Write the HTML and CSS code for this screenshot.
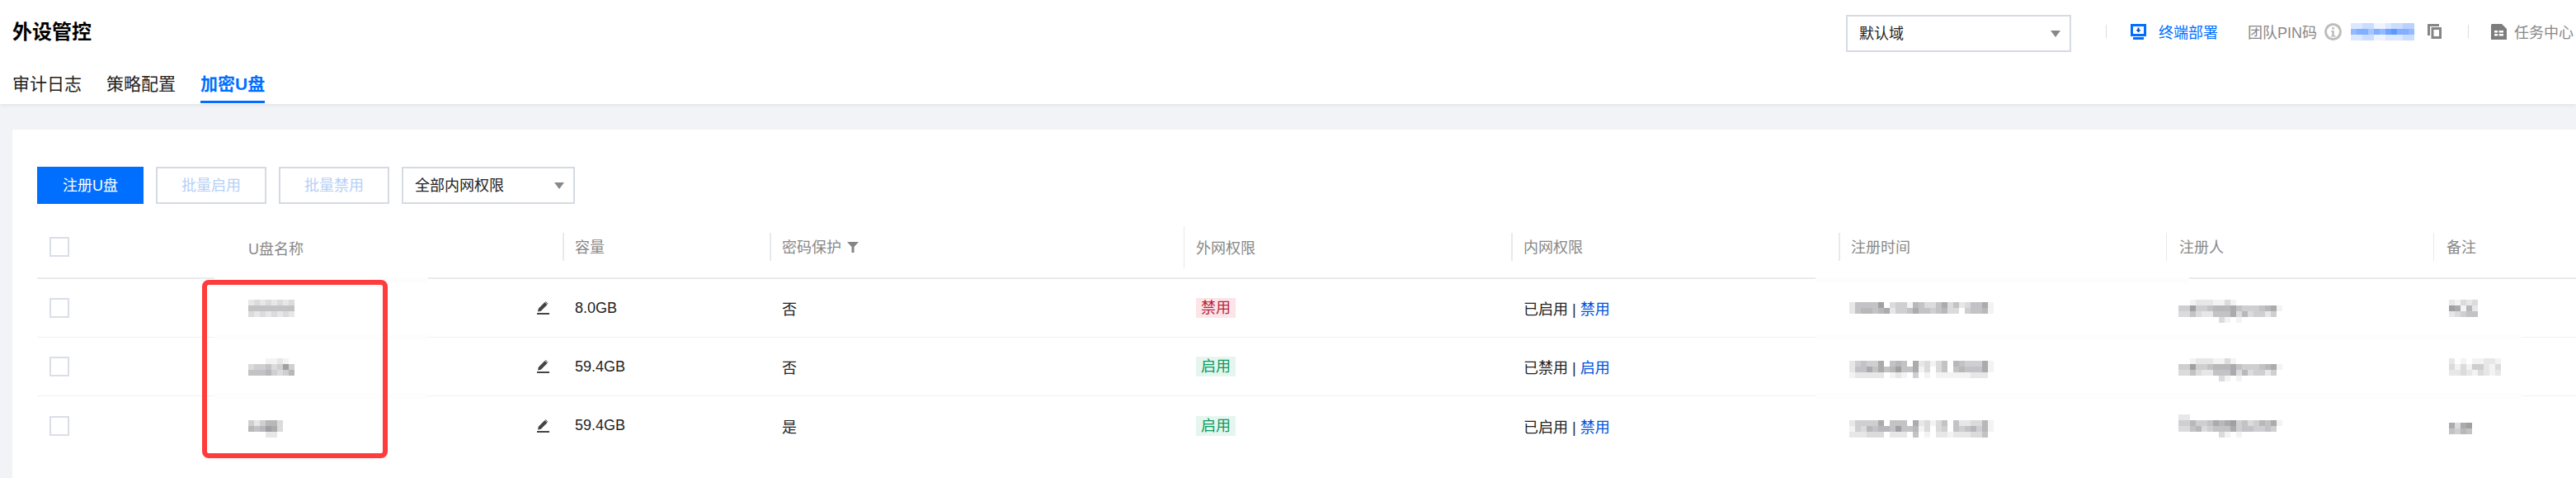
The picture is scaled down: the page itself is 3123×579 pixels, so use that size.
FILE: index.html
```html
<!DOCTYPE html>
<html lang="zh-CN">
<head>
    <meta charset="UTF-8">
    <meta name="viewport" content="width=device-width, initial-scale=1.0">
    <title>外设管控</title>
    <link rel="stylesheet" href="styles.css">
</head>
<body>
    <header class="page-head">
        <div class="head-top">
            <h1 class="page-title">外设管控</h1>
            <div class="head-tools">
                <div class="select select-domain">默认域<i class="caret"></i></div>
                <span class="tool-divider divider-a"></span>
                <svg class="icon icon-deploy" width="19" height="19" viewBox="0 0 19 19">
                    <path fill="#006eff" fill-rule="evenodd" d="M0 0h19v15H0zM3 3v9h13V3z"/>
                    <path fill="#0b4fb5" d="M8.5 4.5h2v2.500h2L9.500 10.500 6.500 7h2z"/>
                    <rect fill="#006eff" x="3" y="16" width="13" height="3"/>
                </svg>
                <a class="tool-link">终端部署</a>
                <span class="tool-text pin-label">团队PIN码</span>
                <svg class="icon icon-info" width="21" height="21" viewBox="0 0 21 21">
                    <circle cx="10.500" cy="10.500" r="9" fill="none" stroke="#bdbdbd" stroke-width="3"/>
                    <rect fill="#bdbdbd" x="9.200" y="5" width="2.600" height="2.600"/>
                    <path fill="#bdbdbd" d="M8 9h3.800v6H13.500v1.500h-5.500V15h1.200v-4.500H8z"/>
                </svg>
                <span class="mosaic mosaic-blue pin-value" data-rows="22331123344 67757689776 22331122233"></span>
                <svg class="icon icon-copy" width="17" height="18" viewBox="0 0 17 18">
                    <path fill="none" stroke="#858585" stroke-width="3" d="M14 1.500H1.500V14"/>
                    <rect fill="none" stroke="#858585" stroke-width="3" x="6" y="5.500" width="9.500" height="11"/>
                </svg>
                <span class="tool-divider divider-b"></span>
                <svg class="icon icon-doc" width="19" height="19" viewBox="0 0 19 19">
                    <path fill="#7d7d7d" d="M1 0h12l6 6v13H0V1z"/>
                    <path fill="#fff" d="M4 8h4v2.500H4zM9.500 8H15v2.500H9.500zM4 12h4v2.500H4zM9.500 12H15v2.500H9.500z"/>
                </svg>
                <span class="tool-text task-label">任务中心</span>
            </div>
        </div>
        <nav class="tabs">
            <a class="tab">审计日志</a>
            <a class="tab">策略配置</a>
            <a class="tab tab-active">加密U盘</a>
        </nav>
    </header>

    <main class="page-main">
        <section class="card">
            <div class="toolbar">
                <button class="btn btn-primary">注册U盘</button>
                <button class="btn btn-disabled">批量启用</button>
                <button class="btn btn-disabled">批量禁用</button>
                <div class="select select-scope">全部内网权限<i class="caret"></i></div>
            </div>

            <table class="disk-table">
                <colgroup>
                    <col class="col-check"><col class="col-name"><col class="col-size"><col class="col-pass">
                    <col class="col-ext"><col class="col-int"><col class="col-time"><col class="col-user"><col class="col-note">
                </colgroup>
                <thead>
                    <tr>
                        <th class="cell-check"><span class="checkbox"></span></th>
                        <th class="th-plain">U盘名称</th>
                        <th><div class="th-inner">容量</div></th>
                        <th><div class="th-inner">密码保护
                            <svg class="icon-filter" width="14" height="13" viewBox="0 0 14 13"><path fill="#858585" d="M0 0h14L8.500 6v7h-3V6z"/></svg>
                        </div></th>
                        <th><div class="th-inner th-tall">外网权限</div></th>
                        <th><div class="th-inner">内网权限</div></th>
                        <th><div class="th-inner">注册时间</div></th>
                        <th><div class="th-inner th-thin">注册人</div></th>
                        <th><div class="th-inner th-thin">备注</div></th>
                    </tr>
                </thead>
                <tbody>
                    <tr>
                        <td class="cell-check"><span class="checkbox"></span></td>
                        <td><div class="name-cell">
                            <span class="mosaic" data-rows="23232323 55555555 32323232"></span>
                            <svg class="icon-edit" width="15" height="16" viewBox="0 0 15 16"><path fill="#444" d="M0 14h15v2H0zM1 12.500l.8-3.700L9.500 1l3 3-7.700 7.700z"/><path fill="#444" d="M10.500 0l3 3-.6.600-3-3z"/></svg>
                        </div></td>
                        <td>8.0GB</td>
                        <td>否</td>
                        <td><span class="tag tag-off">禁用</span></td>
                        <td>已启用 | <a class="link">禁用</a></td>
                        <td class="cell-time"><span class="mosaic" data-rows="2555580344165335735235571 2566567244575545633045561"></span></td>
                        <td class="cell-user"><span class="mosaic" data-rows="000000000000000000 001222113100000000 448445666754445671 335322555736344240 000000031010000000"></span></td>
                        <td class="cell-note"><span class="mosaic" data-rows="21323 87162 23455"></span></td>
                    </tr>
                    <tr>
                        <td class="cell-check"><span class="checkbox"></span></td>
                        <td><div class="name-cell">
                            <span class="mosaic" data-rows="00011210 34453484 55564346"></span>
                            <svg class="icon-edit" width="15" height="16" viewBox="0 0 15 16"><path fill="#444" d="M0 14h15v2H0zM1 12.500l.8-3.700L9.500 1l3 3-7.700 7.700z"/><path fill="#444" d="M10.500 0l3 3-.6.600-3-3z"/></svg>
                        </div></td>
                        <td>59.4GB</td>
                        <td>否</td>
                        <td><span class="tag tag-on">启用</span></td>
                        <td>已禁用 | <a class="link">启用</a></td>
                        <td class="cell-time"><span class="mosaic" data-rows="0000000000000000000000000 2454470565072313506544471 2557575685571303505655571 1222220121040101111112220"></span></td>
                        <td class="cell-user"><span class="mosaic" data-rows="000000000000000000 001222113100000000 448445666754445671 335322555736344240 000000031010000000"></span></td>
                        <td class="cell-note"><span class="mosaic" data-rows="201011221 313144213 223213212"></span></td>
                    </tr>
                    <tr>
                        <td class="cell-check"><span class="checkbox"></span></td>
                        <td><div class="name-cell">
                            <span class="mosaic" data-rows="000000 424663 656873 000220"></span>
                            <svg class="icon-edit" width="15" height="16" viewBox="0 0 15 16"><path fill="#444" d="M0 14h15v2H0zM1 12.500l.8-3.700L9.500 1l3 3-7.700 7.700z"/><path fill="#444" d="M10.500 0l3 3-.6.600-3-3z"/></svg>
                        </div></td>
                        <td>59.4GB</td>
                        <td>是</td>
                        <td><span class="tag tag-on">启用</span></td>
                        <td>已启用 | <a class="link">禁用</a></td>
                        <td class="cell-time"><span class="mosaic" data-rows="0000000000000000000000000 2444470555072313505223361 1436566585561303405456461 2223330222050102212223350"></span></td>
                        <td class="cell-user"><span class="mosaic" data-rows="220000000000000000 446445767845346571 335634555745544540 000000031010000000"></span></td>
                        <td class="cell-note"><span class="mosaic" data-rows="0000 7378 5465"></span></td>
                    </tr>
                </tbody>
            </table>

            <div class="patch patch-name patch-head"></div>
            <div class="patch patch-name patch-r1"></div>
            <div class="patch patch-name patch-r2"></div>
            <div class="patch patch-time patch-head"></div>
            <div class="patch patch-time patch-r1"></div>
            <div class="patch patch-time patch-r2"></div>
            <div class="patch patch-note patch-r1"></div>
            <div class="patch patch-note patch-r2"></div>
            <div class="mark-box"></div>
        </section>
    </main>

    <script src="mosaic.js"></script>
</body>
</html>
```

FILE: styles.css
```css
html, body {
    margin: 0;
    height: 579px;
    overflow: hidden;
}
body {
    font-family: "Liberation Sans", "Noto Sans CJK SC", sans-serif;
    font-size: 18px;
    color: #222;
    background-color: #f2f3f7;
}

/* top bar */
.page-head {
    position: relative;
    box-sizing: border-box;
    height: 126px;
    padding-left: 15px;
    background-color: #fff;
    box-shadow: 0 2px 4px rgba(0, 0, 0, 0.06);
}
.head-top {
    display: flex;
    align-items: center;
    justify-content: space-between;
    height: 76px;
}
.page-title {
    margin: 0 0 3px;
    font-size: 24px;
    font-weight: bold;
    color: #000;
}
.head-tools {
    display: flex;
    align-items: center;
    padding-right: 3px;
}
.tool-divider {
    width: 1px;
    height: 16px;
    background-color: #ddd;
}
.divider-a {
    margin: 0 29px 0 42px;
}
.divider-b {
    margin: 0 27px 0 32px;
}
.tool-link {
    margin-left: 15px;
    color: #006eff;
}
.tool-text {
    color: #888;
}
.pin-label {
    margin-left: 36px;
}
.icon {
    flex: none;
    display: block;
}
.icon-info {
    margin-left: 9px;
}
.pin-value {
    margin-left: 11px;
}
.icon-copy {
    margin-left: 16px;
}
.task-label {
    margin-left: 9px;
}

.select {
    position: relative;
    box-sizing: border-box;
    display: flex;
    align-items: center;
    height: 45px;
    padding-bottom: 3px;
    background-color: #fff;
    border: 2px solid #d5dae3;
}
.select-domain {
    width: 273px;
    margin-top: 5px;
    padding-left: 14px;
}
.select-scope {
    width: 210px;
    padding-left: 14px;
}
.caret {
    position: absolute;
    right: 11px;
    top: 17px;
    border-style: solid;
    border-width: 8px 6px 0;
    border-color: #888 transparent transparent;
}

.tabs {
    display: flex;
    gap: 30px;
    height: 50px;
}
.tab {
    box-sizing: border-box;
    height: 49px;
    padding-top: 10px;
    font-size: 21px;
    line-height: 32px;
    color: #222;
}
.tab-active {
    font-weight: bold;
    color: #006eff;
    border-bottom: 3px solid #006eff;
}

/* content */
.page-main {
    padding: 31px 0 0 15px;
}
.card {
    position: relative;
    height: 422px;
    padding: 45px 0 0 30px;
    box-sizing: border-box;
    background-color: #fff;
}
.toolbar {
    display: flex;
    gap: 15px;
    margin-bottom: 15px;
}
.btn {
    box-sizing: border-box;
    height: 45px;
    padding: 0 0 3px;
    font-family: inherit;
    font-size: 18px;
    background-color: #fff;
}
.btn-primary {
    width: 129px;
    color: #fff;
    background-color: #006eff;
    border: none;
}
.btn-disabled {
    width: 134px;
    color: #b5d0f7;
    border: 2px solid #d5dae3;
}

/* table */
.disk-table {
    width: 3078px;
    table-layout: fixed;
    border-collapse: separate;
    border-spacing: 0;
}
.col-check { width: 241px; }
.col-name { width: 396px; }
.col-size { width: 251px; }
.col-pass { width: 502px; }
.col-ext { width: 397px; }
.col-int { width: 397px; }
.col-time { width: 397px; }
.col-user { width: 324px; }
.col-note { width: 173px; }

.disk-table th {
    box-sizing: border-box;
    height: 76px;
    padding: 0;
    font-weight: normal;
    text-align: left;
    color: #888;
    border-bottom: 2px solid #e9eaed;
}
.disk-table th.th-plain,
.disk-table th.cell-check {
    padding-left: 15px;
}
.disk-table th.th-plain {
    padding-top: 2px;
}
.th-inner {
    height: 34px;
    padding-left: 13px;
    line-height: 37px;
    border-left: 2px solid #e8e9ed;
}
.th-tall {
    height: 51px;
    padding-left: 14px;
    line-height: 54px;
    border-left-width: 1px;
}
.th-thin {
    padding-left: 15px;
    border-left-width: 1px;
}
.icon-filter {
    margin-left: 2px;
}
.disk-table td {
    box-sizing: border-box;
    height: 71px;
    padding: 0 15px;
    border-bottom: 1px solid #f0f1f3;
}
.disk-table tbody tr:last-child td {
    border-bottom: none;
}
.disk-table td.cell-time {
    padding-left: 13px;
}
.disk-table td.cell-user {
    padding-left: 15px;
}
.disk-table td.cell-note {
    padding-left: 19px;
}
.checkbox {
    box-sizing: border-box;
    display: block;
    width: 24px;
    height: 24px;
    background-color: #fff;
    border: 2px solid #dadee7;
}
.name-cell {
    display: flex;
    align-items: center;
    justify-content: space-between;
}
.icon-edit {
    flex: none;
    margin-right: 1px;
}
.tag {
    display: inline-block;
    width: 48px;
    height: 24px;
    line-height: 24px;
    text-align: center;
    vertical-align: middle;
}
.tag-off {
    color: #b8243f;
    background-color: #fbe5e8;
}
.tag-on {
    color: #0a9a5c;
    background-color: #e5f6ef;
}
.link {
    color: #0052d9;
}

/* pixelated values */
.mosaic {
    display: block;
    color: #88888c;
}
.mosaic svg {
    display: block;
}
.mosaic-blue {
    color: #4d8dff;
}
.mosaic rect {
    fill: currentColor;
}

/* smudges left by the blur on the row lines */
.patch {
    position: absolute;
    height: 7px;
    background-color: #fdfdfd;
}
.patch-name { left: 245px; width: 259px; }
.patch-time { left: 2186px; width: 453px; }
.patch-note { left: 2639px; width: 403px; }
.patch-head { top: 179px; }
.patch-r1 { top: 248px; }
.patch-r2 { top: 319px; }

.mark-box {
    position: absolute;
    left: 230px;
    top: 182px;
    box-sizing: border-box;
    width: 225px;
    height: 216px;
    border: 6px solid #ff3b3b;
    border-radius: 8px;
}
```

FILE: mosaic.js
```js
// draws the blurred values from their rows of shades, 0 is empty and 9 the darkest
const TILE = 7;
const SVG_NS = 'http://www.w3.org/2000/svg';

document.querySelectorAll('.mosaic').forEach((el) => {
    const rows = el.dataset.rows.split(' ');
    const svg = document.createElementNS(SVG_NS, 'svg');
    svg.setAttribute('width', rows[0].length * TILE);
    svg.setAttribute('height', rows.length * TILE);

    rows.forEach((row, y) => {
        [...row].forEach((shade, x) => {
            if (shade === '0') return;
            const rect = document.createElementNS(SVG_NS, 'rect');
            rect.setAttribute('x', x * TILE);
            rect.setAttribute('y', y * TILE);
            rect.setAttribute('width', TILE);
            rect.setAttribute('height', TILE);
            rect.setAttribute('fill-opacity', shade / 10);
            svg.appendChild(rect);
        });
    });

    el.appendChild(svg);
});
```
